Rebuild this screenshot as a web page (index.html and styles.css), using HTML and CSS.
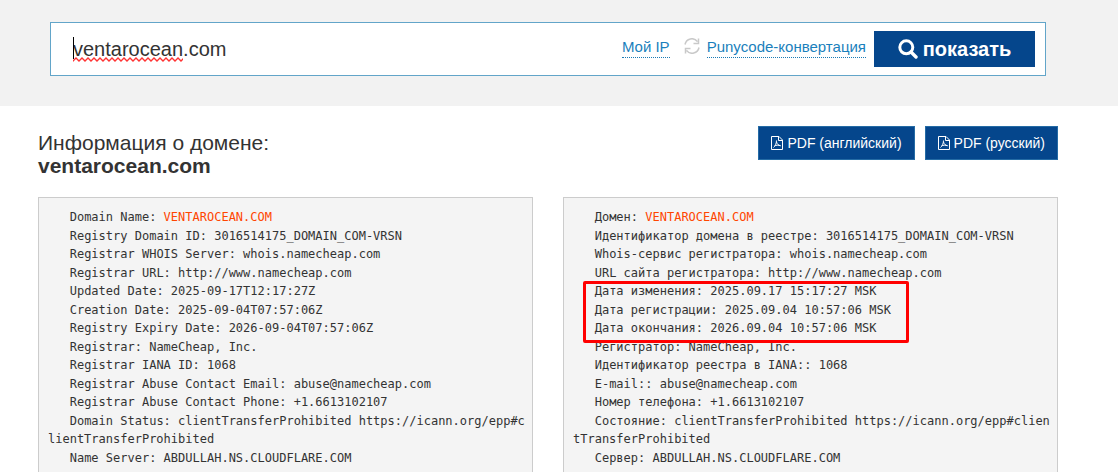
FILE: index.html
```html
<!DOCTYPE html>
<html lang="ru">
<head>
<meta charset="utf-8">
<title>Whois: ventarocean.com</title>
<link rel="stylesheet" href="styles.css">
</head>
<body>
<header class="top">
  <form class="search" role="search">
    <div class="field">
      <input class="query" type="text" aria-label="Домен" value="ventarocean.com" spellcheck="false">
      <span class="caret"></span>
      <svg class="squiggle" width="110" height="5" aria-hidden="true">
        <defs><pattern id="wave" width="6" height="5" patternUnits="userSpaceOnUse"><path d="M-1 3L0 4L3 1L6 4L7 3" fill="none" stroke="#f33" stroke-width="1.4"/></pattern></defs>
        <rect width="110" height="5" fill="url(#wave)"/>
      </svg>
    </div>
    <div class="hints">
      <a class="hint" href="#ip">Мой IP</a>
      <svg class="refresh" viewBox="0 0 16 16" width="16" height="16" aria-hidden="true">
        <path d="M1 6.500A7 7 0 0 1 13.500 3.600M15 9.500A7 7 0 0 1 2.500 12.400M14.500 .5V5.500H9.500M1.500 15.500V10.500H6.500" fill="none" stroke="#c9c9c9" stroke-width="1.500"/>
      </svg>
      <a class="hint" href="#punycode">Punycode-конвертация</a>
    </div>
    <button class="show" type="submit">
      <svg viewBox="0 0 20 20" width="20" height="20" aria-hidden="true"><circle cx="8.300" cy="8.300" r="6.500" fill="none" stroke="#fff" stroke-width="3"/><path d="M13 13L18 18" stroke="#fff" stroke-width="3.400" stroke-linecap="round"/></svg>
      показать
    </button>
  </form>
</header>
<main class="content">
  <div class="heading">
    <h1 class="title">Информация о домене:<br><strong>ventarocean.com</strong></h1>
    <div class="exports">
      <a class="pdf" href="#pdf-en"><svg viewBox="0 0 12 14" width="12" height="14" aria-hidden="true"><path d="M.5 .5H8L11.500 4V13.500H.5ZM7.500 .5V4.500H11.500M2.500 11.500C4 10.500 5.500 7.500 5.500 4.500M5.500 6C6 8 7.500 9.500 9.500 9.700M3.500 10C5 9 7.500 9 9.500 9.700" fill="none" stroke="#fff"/></svg>PDF (английский)</a>
      <a class="pdf" href="#pdf-ru"><svg viewBox="0 0 12 14" width="12" height="14" aria-hidden="true"><path d="M.5 .5H8L11.500 4V13.500H.5ZM7.500 .5V4.500H11.500M2.500 11.500C4 10.500 5.500 7.500 5.500 4.500M5.500 6C6 8 7.500 9.500 9.500 9.700M3.500 10C5 9 7.500 9 9.500 9.700" fill="none" stroke="#fff"/></svg>PDF (русский)</a>
    </div>
  </div>
  <div class="records">
<pre class="record">   Domain Name: <span class="name">VENTAROCEAN.COM</span>
   Registry Domain ID: 3016514175_DOMAIN_COM-VRSN
   Registrar WHOIS Server: whois.namecheap.com
   Registrar URL: http://www.namecheap.com
   Updated Date: 2025-09-17T12:17:27Z
   Creation Date: 2025-09-04T07:57:06Z
   Registry Expiry Date: 2026-09-04T07:57:06Z
   Registrar: NameCheap, Inc.
   Registrar IANA ID: 1068
   Registrar Abuse Contact Email: abuse@namecheap.com
   Registrar Abuse Contact Phone: +1.6613102107
   Domain Status: clientTransferProhibited https://icann.org/epp#clientTransferProhibited
   Name Server: ABDULLAH.NS.CLOUDFLARE.COM</pre>
<pre class="record">   Домен: <span class="name">VENTAROCEAN.COM</span>
   Идентификатор домена в реестре: 3016514175_DOMAIN_COM-VRSN
   Whois-сервис регистратора: whois.namecheap.com
   URL сайта регистратора: http://www.namecheap.com
<span class="dates">   Дата изменения: 2025.09.17 15:17:27 MSK
   Дата регистрации: 2025.09.04 10:57:06 MSK
   Дата окончания: 2026.09.04 10:57:06 MSK
<span class="mark"></span></span>   Регистратор: NameCheap, Inc.
   Идентификатор реестра в IANA:: 1068
   E-mail:: abuse@namecheap.com
   Номер телефона: +1.6613102107
   Состояние: clientTransferProhibited https://icann.org/epp#clientTransferProhibited
   Сервер: ABDULLAH.NS.CLOUDFLARE.COM</pre>
  </div>
</main>
</body>
</html>
```
FILE: styles.css
```css
* { box-sizing: border-box; }
body {
  display: flex;
  flex-direction: column;
  min-height: 100vh;
  margin: 0;
  background: #fff;
  color: #333;
  font-family: "Liberation Sans", Arial, sans-serif;
}
.top {
  padding: 22px 72px 30px 50px;
  background: #f2f2f2;
}
.search {
  display: flex;
  align-items: center;
  padding: 8px 10px 8px 22px;
  border: 1px solid #62a5c9;
  background: #fff;
}
.field { position: relative; flex: 1; }
.query {
  display: block;
  width: 100%;
  padding: 0;
  border: 0;
  outline: 0;
  background: none;
  color: #333;
  font: 20px/24px "Liberation Sans", Arial, sans-serif;
}
.caret {
  position: absolute;
  left: 0;
  top: 0;
  width: 1px;
  height: 22px;
  background: #000;
}
.squiggle { position: absolute; left: 0; top: 20px; }
.hints {
  display: flex;
  align-items: center;
  padding-bottom: 3px;
}
.hint {
  border-bottom: 1px dotted #1a7ab5;
  color: #1a7fbc;
  font-size: 15px;
  line-height: 20px;
  text-decoration: none;
}
.refresh { margin: 0 7px 4px 14px; }
.show {
  display: flex;
  align-items: center;
  justify-content: center;
  gap: 5px;
  width: 161px;
  height: 36px;
  margin-left: 8px;
  padding: 0;
  border: 0;
  background: #05468c;
  color: #fff;
  font: bold 20px/24px "Liberation Sans", Arial, sans-serif;
}
.content {
  display: flex;
  flex-direction: column;
  flex: 1;
  padding: 20px 60px 0 38px;
}
.heading {
  display: flex;
  justify-content: space-between;
  align-items: flex-start;
  margin-bottom: 14px;
}
.title {
  margin: 0;
  padding: 5px 0 6px;
  font-size: 21px;
  line-height: 23px;
  font-weight: normal;
}
.exports { display: flex; gap: 10px; }
.pdf {
  display: flex;
  align-items: center;
  gap: 4px;
  padding: 6px 12px;
  border: 1px solid #246ba5;
  background: #05468c;
  color: #fff;
  font-size: 14px;
  line-height: 20px;
  text-decoration: none;
}
.records {
  display: grid;
  grid-template-columns: 1fr 1fr;
  gap: 30px;
  flex: 1;
}
.record {
  margin: 0;
  padding: 10px 6px 0 9px;
  border: 1px solid #ccc;
  border-bottom: 0;
  background: #f4f4f4;
  font: 12px/1.545 "DejaVu Sans Mono", monospace;
  white-space: pre-wrap;
  word-break: break-all;
}
.name { color: #ff4500; }
.dates { position: relative; }
.mark {
  position: absolute;
  left: 10px;
  top: -3px;
  width: 326px;
  height: 62px;
  border: 3px solid #f00;
  border-radius: 2px;
}
```
